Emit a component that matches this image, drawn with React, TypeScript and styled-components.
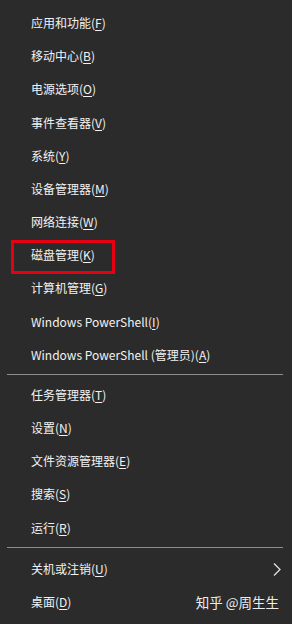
import React from "react";
import styled, { createGlobalStyle } from "styled-components";

const Global = createGlobalStyle`
  html, body { margin: 0; padding: 0; background: #2b2b2b; }
  body { width: 292px; height: 624px; overflow: hidden; }
`;

const Menu = styled.div`
  position: relative;
  width: 292px;
  height: 624px;
  background: #2b2b2b;
  padding-top: 6.4px;
  box-sizing: border-box;
  font-family: "Noto Sans CJK SC", "Noto Sans", sans-serif;
  color: #f2f2f2;
`;

const Item = styled.div`
  position: relative;
  height: 33.2px;
  display: flex;
  align-items: center;
  padding-left: 31px;
  padding-right: 10px;
  font-size: 12px;
  line-height: 1;
  white-space: nowrap;
`;

const Label = styled.span`
  flex: 1;
`;

const Key = styled.span`
  text-decoration: underline;
  text-underline-offset: 2px;
  text-decoration-thickness: 1px;
`;

const Highlight = styled.span`
  position: absolute;
  left: 11px;
  top: 1.4px;
  width: 104px;
  height: 34px;
  border: 3.5px solid #e60012;
  box-sizing: border-box;
  pointer-events: none;
`;

const Divider = styled.div<{ $after: number }>`
  height: 1px;
  margin: 2.4px 9px ${(p) => p.$after}px 7px;
  background: #8c8c8c;
`;

const Chevron = styled.svg`
  width: 10px;
  height: 15px;
`;

const Watermark = styled.div`
  position: absolute;
  right: 13px;
  bottom: 12px;
  font-size: 13.5px;
  color: #ececec;
  font-family: "Noto Sans CJK SC", sans-serif;
`;

type Entry = { text: string; key: string; boxed?: boolean; sub?: boolean };

const group1: Entry[] = [
  { text: "应用和功能", key: "F" },
  { text: "移动中心", key: "B" },
  { text: "电源选项", key: "O" },
  { text: "事件查看器", key: "V" },
  { text: "系统", key: "Y" },
  { text: "设备管理器", key: "M" },
  { text: "网络连接", key: "W" },
  { text: "磁盘管理", key: "K", boxed: true },
  { text: "计算机管理", key: "G" },
  { text: "Windows PowerShell", key: "I" },
  { text: "Windows PowerShell (管理员)", key: "A" },
];

const group2: Entry[] = [
  { text: "任务管理器", key: "T" },
  { text: "设置", key: "N" },
  { text: "文件资源管理器", key: "E" },
  { text: "搜索", key: "S" },
  { text: "运行", key: "R" },
];

const group3: Entry[] = [
  { text: "关机或注销", key: "U", sub: true },
  { text: "桌面", key: "D" },
];

const Row = ({ e }: { e: Entry }) => (
  <Item>
    {e.boxed && <Highlight />}
    <Label>
      {e.text}(<Key>{e.key}</Key>)
    </Label>
    {e.sub && (
      <Chevron viewBox="0 0 10 15">
        <path d="M2 1.5 L8 7.5 L2 13.5" fill="none" stroke="#e0e0e0" strokeWidth="1.3" />
      </Chevron>
    )}
  </Item>
);

export default function App() {
  return (
    <>
      <Global />
      <Menu>
        {group1.map((e) => (
          <Row key={e.text} e={e} />
        ))}
        <Divider $after={3.4} />
        {group2.map((e) => (
          <Row key={e.text} e={e} />
        ))}
        <Divider $after={5} />
        {group3.map((e) => (
          <Row key={e.text} e={e} />
        ))}
        <Watermark>知乎 @周生生</Watermark>
      </Menu>
    </>
  );
}
